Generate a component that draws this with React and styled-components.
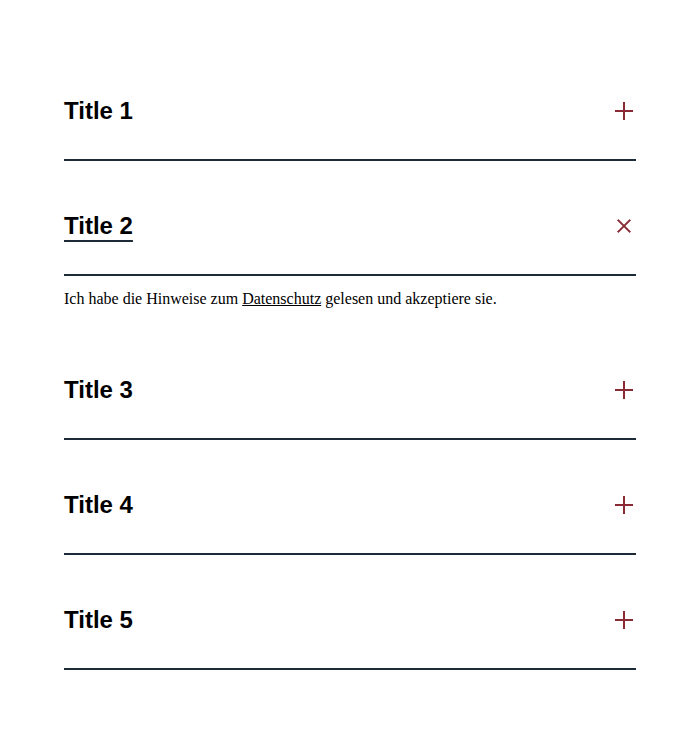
import React, { useState } from 'react'
import styled, { createGlobalStyle } from 'styled-components';

const GlobalStyle = createGlobalStyle`
    body{
        margin: 0;
        background: #fff;
    }
`;

const items = [
    { id: 1, title: 'Title 1' },
    { id: 2, title: 'Title 2' },
    { id: 3, title: 'Title 3' },
    { id: 4, title: 'Title 4' },
    { id: 5, title: 'Title 5' },
];

function PlusIcon({ open }) {
    return (
        <IconStyled viewBox="0 0 18 18" $open={open}>
            <path d="M9 0V18M0 9H18" stroke="#8a2a34" strokeWidth="2" fill="none" />
        </IconStyled>
    )
}

function Accordion() {
    const [open, setOpen] = useState(2);
    return (
        <AccordionStyled>
            {items.map((item) => {
                const isOpen = open === item.id;
                return (
                    <div className="item" key={item.id}>
                        <Header type="button" onClick={() => setOpen(isOpen ? null : item.id)}>
                            <Title $open={isOpen}>{item.title}</Title>
                            <PlusIcon open={isOpen} />
                        </Header>
                        {isOpen && (
                            <Panel>
                                Ich habe die Hinweise zum <a href="#">Datenschutz</a> gelesen und akzeptiere sie.
                            </Panel>
                        )}
                    </div>
                )
            })}
        </AccordionStyled>
    )
}

function App() {
    return (
        <>
            <GlobalStyle />
            <Accordion />
        </>
    )
}

const AccordionStyled = styled.div`
    width: 572px;
    margin: 0 auto;
    padding-top: 46px;
`;

const Header = styled.button`
    width: 100%;
    display: flex;
    align-items: center;
    justify-content: space-between;
    padding: 50px 3px 33px 0;
    background: none;
    border: none;
    border-bottom: 2px solid #1d2b38;
    cursor: pointer;
    text-align: left;
`;

const Title = styled.span`
    font-family: "Liberation Sans", Arial, sans-serif;
    font-weight: 700;
    font-size: 24px;
    line-height: 30px;
    color: #000;
    text-decoration: ${p => p.$open ? 'underline' : 'none'};
    text-decoration-color: #1d2b38;
    text-decoration-thickness: 2px;
    text-underline-offset: 6px;
`;

const IconStyled = styled.svg`
    width: 18px;
    height: 18px;
    transform: rotate(${p => p.$open ? '45deg' : '0deg'});
`;

const Panel = styled.div`
    font-family: "Liberation Serif", "Times New Roman", serif;
    font-size: 16px;
    line-height: 18px;
    color: #000;
    padding: 14px 0 17px;
    a{
        color: #000;
        text-decoration: underline;
    }
`;

export default App;
